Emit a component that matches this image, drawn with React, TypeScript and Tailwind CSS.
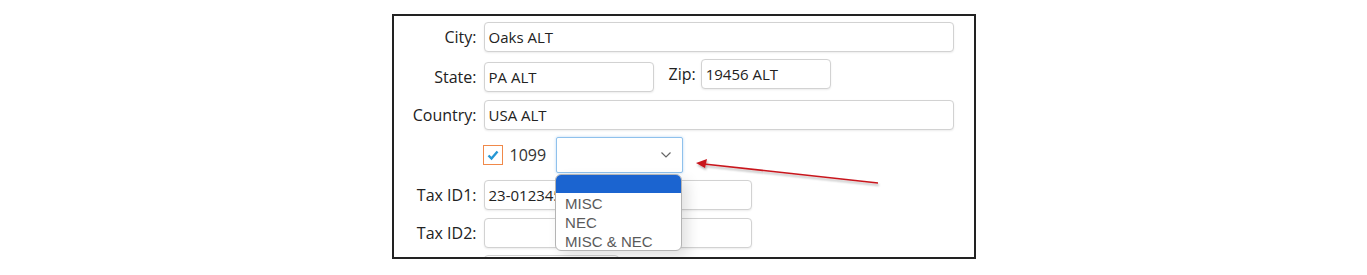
import React from "react"

interface FieldProps {
  label: string
  value?: string
  width: string
}

function Label({ text }: { text: string }) {
  return <span className="w-[83px] shrink-0 text-right text-[16px] text-[#222]">{text}</span>
}

function Input({ value = "", width }: { value?: string; width: string }) {
  return (
    <div
      className={`${width} h-[30px] shrink-0 overflow-hidden whitespace-nowrap rounded-[4px] border border-[#d2d2d2] bg-white pl-[4px] text-[15px] leading-[28px] text-[#222] shadow-[0_1px_2px_rgba(0,0,0,0.08)]`}
    >
      {value}
    </div>
  )
}

function Field({ label, value, width }: FieldProps) {
  return (
    <div className="flex h-[30px] items-center">
      <Label text={label} />
      <div className="ml-[7px]">
        <Input value={value} width={width} />
      </div>
    </div>
  )
}

function Dropdown() {
  return (
    <div className="absolute left-[-1px] top-[37px] z-10 h-[77px] w-[127px] overflow-hidden rounded-[6px] border border-[#b4b4b4] bg-white font-['Liberation_Sans',Arial,sans-serif] text-[15px] text-[#5a5a5a] shadow-[6px_6px_14px_rgba(0,0,0,0.12)]">
      <div className="h-[18px] bg-[#1b64d0]" />
      <div className="pl-[9px] pt-[1px] leading-[19px]">MISC</div>
      <div className="pl-[9px] leading-[19px]">NEC</div>
      <div className="pl-[9px] leading-[19px]">MISC &amp; NEC</div>
    </div>
  )
}

function Arrow() {
  return (
    <svg className="pointer-events-none absolute left-0 top-0" width="1367" height="275">
      <defs>
        <filter id="sh" x="-10%" y="-50%" width="120%" height="200%">
          <feDropShadow dx="1" dy="2" stdDeviation="1" floodColor="#000" floodOpacity="0.3" />
        </filter>
      </defs>
      <g filter="url(#sh)">
        <line x1="878" y1="183" x2="704" y2="164" stroke="#c8161d" strokeWidth="1.6" />
        <polygon points="696,163 707,159 705,168" fill="#c8161d" />
      </g>
    </svg>
  )
}

export default function App() {
  return (
    <div className="relative h-[275px] w-[1367px] bg-white pt-[14px] font-['Open_Sans',sans-serif]">
      <div className="mx-auto h-[245px] w-[584px] overflow-hidden border-2 border-[#222] pt-[6px]">
        <Field label="City:" value="Oaks ALT" width="w-[470px]" />

        <div className="mt-[10px] flex h-[30px] items-center">
          <Label text="State:" />
          <div className="ml-[7px]">
            <Input value="PA ALT" width="w-[170px]" />
          </div>
          <div className="-mt-[6px] ml-[15px] flex items-center">
            <span className="text-[16px] text-[#222]">Zip:</span>
            <div className="ml-[5px]">
              <Input value="19456 ALT" width="w-[130px]" />
            </div>
          </div>
        </div>

        <div className="mt-[8px]">
          <Field label="Country:" value="USA ALT" width="w-[470px]" />
        </div>

        <div className="mt-[7px] flex h-[36px] items-center pl-[89px]">
          <div className="flex h-[20px] w-[20px] items-center justify-center border-[1.5px] border-[#f0894a] bg-white">
            <svg width="14" height="14" viewBox="0 0 14 14">
              <path d="M2.5 7.5 L5.5 10.5 L11.5 3.5" fill="none" stroke="#2597d4" strokeWidth="2.4" />
            </svg>
          </div>
          <span className="ml-[7px] text-[16px] text-[#333]">1099</span>
          <div className="relative ml-[10px]">
            <div className="flex h-[36px] w-[127px] items-center justify-end rounded-[2px] border border-[#8fc1ec] bg-white pr-[10px] shadow-[0_0_3px_rgba(120,180,235,0.5)]">
              <svg width="12" height="8" viewBox="0 0 12 8">
                <path d="M1.5 1.5 L6 6 L10.5 1.5" fill="none" stroke="#666" strokeWidth="1.2" />
              </svg>
            </div>
            <Dropdown />
          </div>
        </div>

        <div className="mt-[7px]">
          <Field label="Tax ID1:" value="23-012345" width="w-[268px]" />
        </div>
        <div className="mt-[8px]">
          <Field label="Tax ID2:" value="" width="w-[268px]" />
        </div>
        <div className="mt-[7px] pl-[90px]">
          <Input value="" width="w-[135px]" />
        </div>
      </div>
      <Arrow />
    </div>
  )
}
